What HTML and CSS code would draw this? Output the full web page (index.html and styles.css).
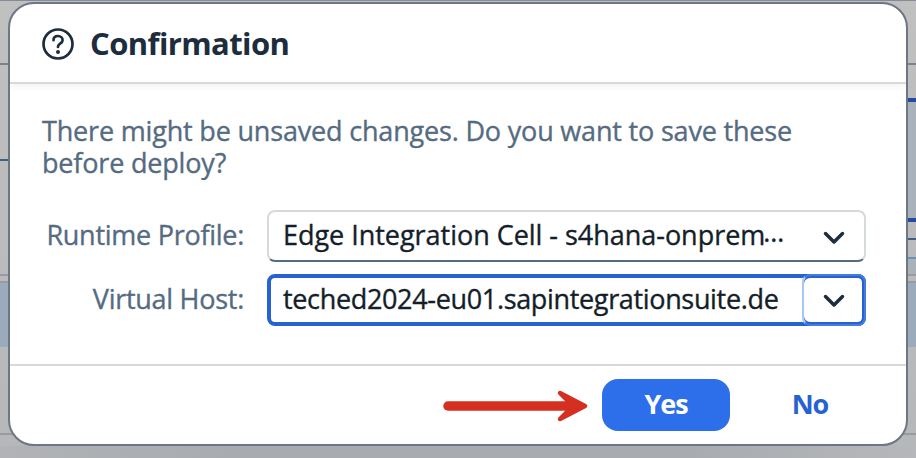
FILE: index.html
```html
<!DOCTYPE html>
<html lang="en">
<head>
<meta charset="utf-8">
<title>Confirmation</title>
<link rel="stylesheet" href="styles.css">
</head>
<body>
<div class="backdrop"></div>
<main class="dialog">
  <header class="header">
    <svg class="help" viewBox="0 0 32 32" width="32" height="32"><circle cx="16" cy="16" r="14.5"/><path d="M11.5 12.2C11.5 9.500 13.400 8 16 8s4.600 1.700 4.600 4.200c0 3.200-4.600 3.500-4.600 6.200v.6"/><circle class="dot" cx="16" cy="24" r="2"/></svg>
    <h1 class="title">Confirmation</h1>
  </header>
  <section class="content">
    <p class="message">There might be unsaved changes. Do you want to save these<br>before deploy?</p>
    <div class="form">
      <label class="label">Runtime Profile:</label>
      <div class="field select"><span class="value">Edge Integration Cell - s4hana-onprem<span class="dots">…</span></span><span class="arrow"><svg viewBox="0 0 22 14" width="22" height="14"><path d="M2.500 2.500 11 11l8.500-8.500"/></svg></span></div>
      <label class="label">Virtual Host:</label>
      <div class="field combo"><span class="value">teched2024-eu01.sapintegrationsuite.de</span><span class="arrow"><svg viewBox="0 0 22 14" width="22" height="14"><path d="M2.500 2.500 11 11l8.500-8.500"/></svg></span></div>
    </div>
  </section>
  <footer class="footer">
    <svg class="pointer" viewBox="0 0 146 32" width="146" height="32"><path d="M5 16h130"/><path class="head" d="M117 3 142 16 117 29 130 16Z"/></svg>
    <button class="button yes">Yes</button>
    <button class="button no">No</button>
  </footer>
</main>
</body>
</html>
```
FILE: styles.css
```css
* { box-sizing: border-box; }
body {
  margin: 0;
  width: 916px;
  height: 458px;
  padding: 2px 8px 12px;
  overflow: hidden;
  font-family: "Open Sans", sans-serif;
  background: #b7b9bb;
}
.backdrop {
  position: absolute;
  inset: 0;
  background:
    linear-gradient(#858c98, #858c98) 0 0 / 100% 1px no-repeat,
    linear-gradient(#7c838c, #7c838c) 0 63px / 100% 2px no-repeat,
    linear-gradient(#244b9f, #244b9f) 100% 98px / 20px 4px no-repeat,
    linear-gradient(#244b9f, #244b9f) 100% 218px / 20px 4px no-repeat,
    linear-gradient(#425f82, #425f82) 0 159px / 20px 2px no-repeat,
    linear-gradient(#425f82, #425f82) 100% 238px / 20px 2px no-repeat,
    linear-gradient(#6694b9, #6694b9) 100% 257px / 20px 2px no-repeat,
    linear-gradient(#9a9b9f, #9a9b9f) 0 274px / 100% 2px no-repeat,
    linear-gradient(#9a9b9f, #9a9b9f) 0 281px / 100% 2px no-repeat,
    linear-gradient(#9a9b9d, #9a9b9d) 0 433px / 100% 2px no-repeat,
    linear-gradient(#a9b2ba, #a9b2ba) 100% 102px / 20px 116px no-repeat,
    linear-gradient(#a9b2b8, #a9b2b8) 100% 259px / 20px 15px no-repeat,
    linear-gradient(#9cabbc, #9cabbc) 0 283px / 100% 64px no-repeat,
    linear-gradient(90deg, #b1b3b6, #a8acb0 25%, #a8acb0 75%, #b6b7ba) 0 446px / 100% 12px no-repeat,
    linear-gradient(#c0c0c1, #b6b7b8);
}
.dialog {
  position: relative;
  height: 444px;
  display: flex;
  flex-direction: column;
  overflow: hidden;
  border: 2px solid #6c7684;
  border-radius: 26px;
  background: #fff;
}
.header {
  flex: 0 0 80px;
  display: flex;
  align-items: center;
  gap: 16px;
  padding: 1px 32px 0;
  border-bottom: 2px solid #d9d9d9;
  box-shadow: 0 2px 8px rgba(0, 0, 0, .06);
}
.help { fill: none; stroke: #1d2d3e; stroke-width: 2.700; stroke-linecap: round; }
.help .dot { fill: #1d2d3e; stroke: none; }
.title { margin: 0 0 2px; font-size: 31px; line-height: 40px; font-weight: 700; letter-spacing: -.6px; color: #1d2d3e; }
.content { flex: 1; padding: 31px 40px 0 32px; }
.message { margin: 0; font-size: 27px; line-height: 32px; letter-spacing: -.18px; color: #556b82; -webkit-text-stroke: .35px #556b82; white-space: nowrap; }
.form {
  margin-top: 31px;
  display: grid;
  grid-template-columns: 202px 599px;
  column-gap: 23px;
  row-gap: 12px;
}
.label { display: flex; align-items: center; justify-content: flex-end; padding-bottom: 3px; white-space: nowrap; font-size: 27px; letter-spacing: -.27px; color: #556b82; -webkit-text-stroke: .35px #556b82; }
.field {
  height: 52px;
  display: flex;
  border: 2px solid #d5dadd;
  border-bottom-color: #556b82;
  border-radius: 8px;
  color: #131e29;
}
.value { flex: 1; padding-left: 14px; font-size: 27px; line-height: 46px; letter-spacing: -.03px; -webkit-text-stroke: .35px #131e29; white-space: nowrap; }
.dots { display: inline-block; margin-left: -2px; line-height: 1; letter-spacing: 0; transform: translateY(-3px); }
.arrow { flex: 0 0 62px; display: flex; align-items: center; justify-content: center; padding: 4px 0 0 1px; }
.arrow svg { fill: none; stroke: #1d2d3e; stroke-width: 3.500; stroke-linecap: round; stroke-linejoin: round; }
.combo { border: 4px solid #2762d2; }
.combo .value { padding-left: 12px; line-height: 42px; letter-spacing: -.34px; }
.combo .arrow {
  flex-basis: 64px;
  margin: -4px -4px -4px 0;
  padding: 2px 0 0;
  border: 2px solid #427ddf;
  border-left-color: #a7c7fa;
  border-radius: 8px;
  box-shadow: inset -2px 0 #2762d2, inset 0 2px #2762d2, inset 0 -2px #2762d2;
}
.footer {
  flex: 0 0 80px;
  display: flex;
  align-items: center;
  padding: 0 46px 0 433px;
  border-top: 2px solid #d9d9d9;
}
.pointer { flex: none; margin: 2px 13px 0 0; stroke: #d52f22; stroke-width: 9.500; stroke-linecap: round; overflow: visible; }
.pointer .head { stroke-width: 4.500; stroke-linejoin: round; fill: #d52f22; }
.button { border: 0; padding: 0 0 2px; height: 52px; border-radius: 16px; font: 700 27px/50px "Open Sans", sans-serif; letter-spacing: -1px; }
.yes { width: 128px; background: #2d6eea; color: #fff; }
.no { width: 96px; margin-left: 32px; background: none; color: #2762d2; }
```
